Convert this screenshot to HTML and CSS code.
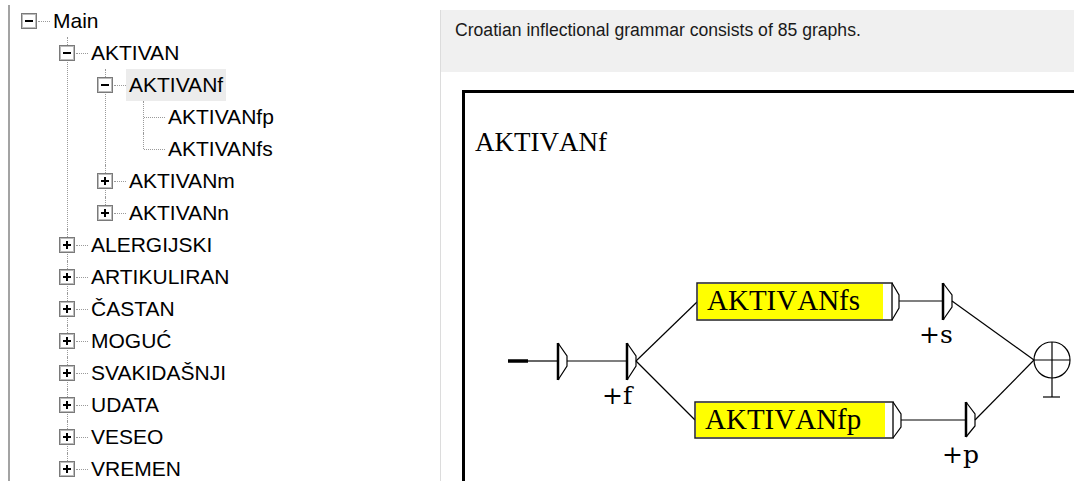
FILE: index.html
```html
<!DOCTYPE html>
<html lang="hr">
<head>
  <meta charset="UTF-8" />
  <title>Croatian inflectional grammar</title>
  <link rel="stylesheet" href="styles.css">
</head>
<body>
  <div class="app">
    <!-- Graph tree -->
    <div class="tree-pane">
      <ul class="tree">
        <li>
          <div class="row"><span class="exp minus"></span><span class="dash"></span><span class="label">Main</span></div>
          <ul class="sub">
            <li>
              <div class="row"><span class="exp minus"></span><span class="dash"></span><span class="label">AKTIVAN</span></div>
              <ul class="sub">
                <li>
                  <div class="row"><span class="exp minus"></span><span class="dash"></span><span class="label sel">AKTIVANf</span></div>
                  <ul class="sub">
                    <li class="leaf"><div class="row"><span class="spacer"></span><span class="dash"></span><span class="label">AKTIVANfp</span></div></li>
                    <li class="leaf"><div class="row"><span class="spacer"></span><span class="dash"></span><span class="label">AKTIVANfs</span></div></li>
                  </ul>
                </li>
                <li><div class="row"><span class="exp plus"></span><span class="dash"></span><span class="label">AKTIVANm</span></div></li>
                <li><div class="row"><span class="exp plus"></span><span class="dash"></span><span class="label">AKTIVANn</span></div></li>
              </ul>
            </li>
            <li><div class="row"><span class="exp plus"></span><span class="dash"></span><span class="label">ALERGIJSKI</span></div></li>
            <li><div class="row"><span class="exp plus"></span><span class="dash"></span><span class="label">ARTIKULIRAN</span></div></li>
            <li><div class="row"><span class="exp plus"></span><span class="dash"></span><span class="label">ČASTAN</span></div></li>
            <li><div class="row"><span class="exp plus"></span><span class="dash"></span><span class="label">MOGUĆ</span></div></li>
            <li><div class="row"><span class="exp plus"></span><span class="dash"></span><span class="label">SVAKIDAŠNJI</span></div></li>
            <li><div class="row"><span class="exp plus"></span><span class="dash"></span><span class="label">UDATA</span></div></li>
            <li><div class="row"><span class="exp plus"></span><span class="dash"></span><span class="label">VESEO</span></div></li>
            <li><div class="row"><span class="exp plus"></span><span class="dash"></span><span class="label">VREMEN</span></div></li>
          </ul>
        </li>
      </ul>
    </div>

    <!-- Graph view -->
    <div class="graph-pane">
      <div class="info">Croatian inflectional grammar consists of 85 graphs.</div>
      <div class="frame">
        <div class="graph-title">AKTIVANf</div>
        <svg class="graph" width="609" height="325" viewBox="465 156 609 325">
          <!-- transitions -->
          <line x1="528" y1="361" x2="558" y2="361"/>
          <line x1="567" y1="361" x2="627" y2="361"/>
          <line x1="636" y1="361" x2="697" y2="302"/>
          <line x1="636" y1="361" x2="695" y2="420"/>
          <line x1="899" y1="301" x2="943" y2="301"/>
          <line x1="901" y1="420" x2="966" y2="420"/>
          <line x1="952" y1="301" x2="1034" y2="360"/>
          <line x1="975" y1="420" x2="1034" y2="360"/>

          <!-- initial state -->
          <line class="start" x1="508" y1="361" x2="528" y2="361"/>
          <line class="bar" x1="558" y1="343" x2="558" y2="380"/>
          <path d="M558 343 L567 356 L567 366 L558 380"/>

          <!-- +f -->
          <line class="bar" x1="627" y1="343" x2="627" y2="380"/>
          <path d="M627 343 L636 356 L636 366 L627 380"/>
          <text class="out" x="602" y="404">+f</text>

          <!-- AKTIVANfs -->
          <rect class="box-bg" x="697" y="283" width="195" height="37"/>
          <rect class="box-fill" x="698" y="284" width="185" height="35"/>
          <rect class="box-line" x="697" y="283" width="195" height="37"/>
          <path d="M892 283 L899 295 L899 308 L892 320"/>
          <text class="box-label" x="707" y="310">AKTIVANfs</text>

          <!-- AKTIVANfp -->
          <rect class="box-bg" x="695" y="402" width="198" height="36"/>
          <rect class="box-fill" x="696" y="403" width="189" height="34"/>
          <rect class="box-line" x="695" y="402" width="198" height="36"/>
          <path d="M893 402 L901 414 L901 427 L893 438"/>
          <text class="box-label" x="705" y="429">AKTIVANfp</text>

          <!-- +s -->
          <line class="bar" x1="943" y1="283" x2="943" y2="320"/>
          <path d="M943 283 L952 295 L952 307 L943 320"/>
          <text class="out" x="919" y="343">+s</text>

          <!-- +p -->
          <line class="bar" x1="966" y1="402" x2="966" y2="437"/>
          <path d="M966 402 L975 414 L975 426 L966 437"/>
          <text class="out" x="942" y="463">+p</text>

          <!-- final state -->
          <circle cx="1052" cy="360" r="18"/>
          <line x1="1034" y1="360" x2="1070" y2="360"/>
          <line x1="1052" y1="342" x2="1052" y2="397"/>
          <line x1="1043" y1="397" x2="1060" y2="397"/>
        </svg>
      </div>
    </div>
  </div>
</body>
</html>
```

FILE: styles.css
```css
html,
body {
  margin: 0;
  height: 100%;
  overflow: hidden;
  background-color: #fff;
}

.app {
  display: flex;
  height: 481px;
}

/* Tree */

.tree-pane {
  width: 430px;
  margin: 5px 0 0 8px;
  border-left: 2px solid #a3a3a3;
  font-family: "Liberation Sans", Arial, sans-serif;
  font-size: 21px;
  color: #000;
}

.tree,
.sub {
  list-style: none;
  margin: 0;
}

.tree {
  padding: 0 0 0 11px;
}

.sub {
  padding: 0 0 0 38px;
}

.sub > li {
  position: relative;
}

.sub > li::before {
  content: "";
  position: absolute;
  left: 8px;
  top: 0;
  bottom: 0;
  border-left: 1px dotted #9a9a9a;
}

.sub > li:last-child::before {
  bottom: auto;
  height: 16px;
}

.row {
  display: flex;
  align-items: center;
  height: 32px;
}

.exp {
  position: relative;
  z-index: 1;
  width: 16px;
  height: 16px;
  box-sizing: border-box;
  border: 1px solid #7a7a7a;
  box-shadow: inset 0 0 0 1px #bcbcbc;
  background-color: #fff;
  flex-shrink: 0;
}

.exp::before,
.plus::after {
  content: "";
  position: absolute;
  background-color: #000;
}

.exp::before {
  left: 3px;
  top: 6px;
  width: 8px;
  height: 2px;
}

.plus::after {
  left: 6px;
  top: 3px;
  width: 2px;
  height: 8px;
}

.dash {
  width: 12px;
  margin-left: 1px;
  border-top: 1px dotted #9a9a9a;
}

.spacer {
  width: 8px;
}

.leaf .dash {
  width: 21px;
}

.label {
  padding: 0 3px;
  line-height: 32px;
  white-space: nowrap;
}

.label.sel {
  background-color: #ececec;
}

/* Graph */

.graph-pane {
  flex-grow: 1;
  margin-top: 10px;
  border-left: 1px solid #dcdcdc;
  overflow: hidden;
}

.info {
  height: 62px;
  box-sizing: border-box;
  padding: 9px 0 0 14px;
  background-color: #f0f0f0;
  font-family: "Liberation Sans", Arial, sans-serif;
  font-size: 17.6px;
  line-height: 22px;
  color: #1a1a1a;
}

.frame {
  margin: 18px 0 0 21px;
  height: 420px;
  border-top: 3px solid #000;
  border-left: 3px solid #000;
}

.graph-title {
  margin: 36px 0 0 10px;
  font-family: "Liberation Serif", "Times New Roman", serif;
  font-size: 27px;
  line-height: 27px;
  font-kerning: none;
}

.graph {
  display: block;
}

.graph line,
.graph path,
.graph circle {
  stroke: #000;
  stroke-width: 1.2;
  fill: none;
}

.graph .start {
  stroke-width: 3.5;
}

.graph .bar {
  stroke-width: 2.5;
}

.box-bg {
  fill: #fff;
}

.box-fill {
  fill: #ffff00;
}

.graph .box-line {
  fill: none;
  stroke: #222;
  stroke-width: 1.5;
}

.box-label {
  font-family: "Liberation Serif", "Times New Roman", serif;
  font-size: 29px;
  font-kerning: none;
}

.out {
  font-family: "DejaVu Serif", "Liberation Serif", serif;
  font-size: 25px;
}
```
